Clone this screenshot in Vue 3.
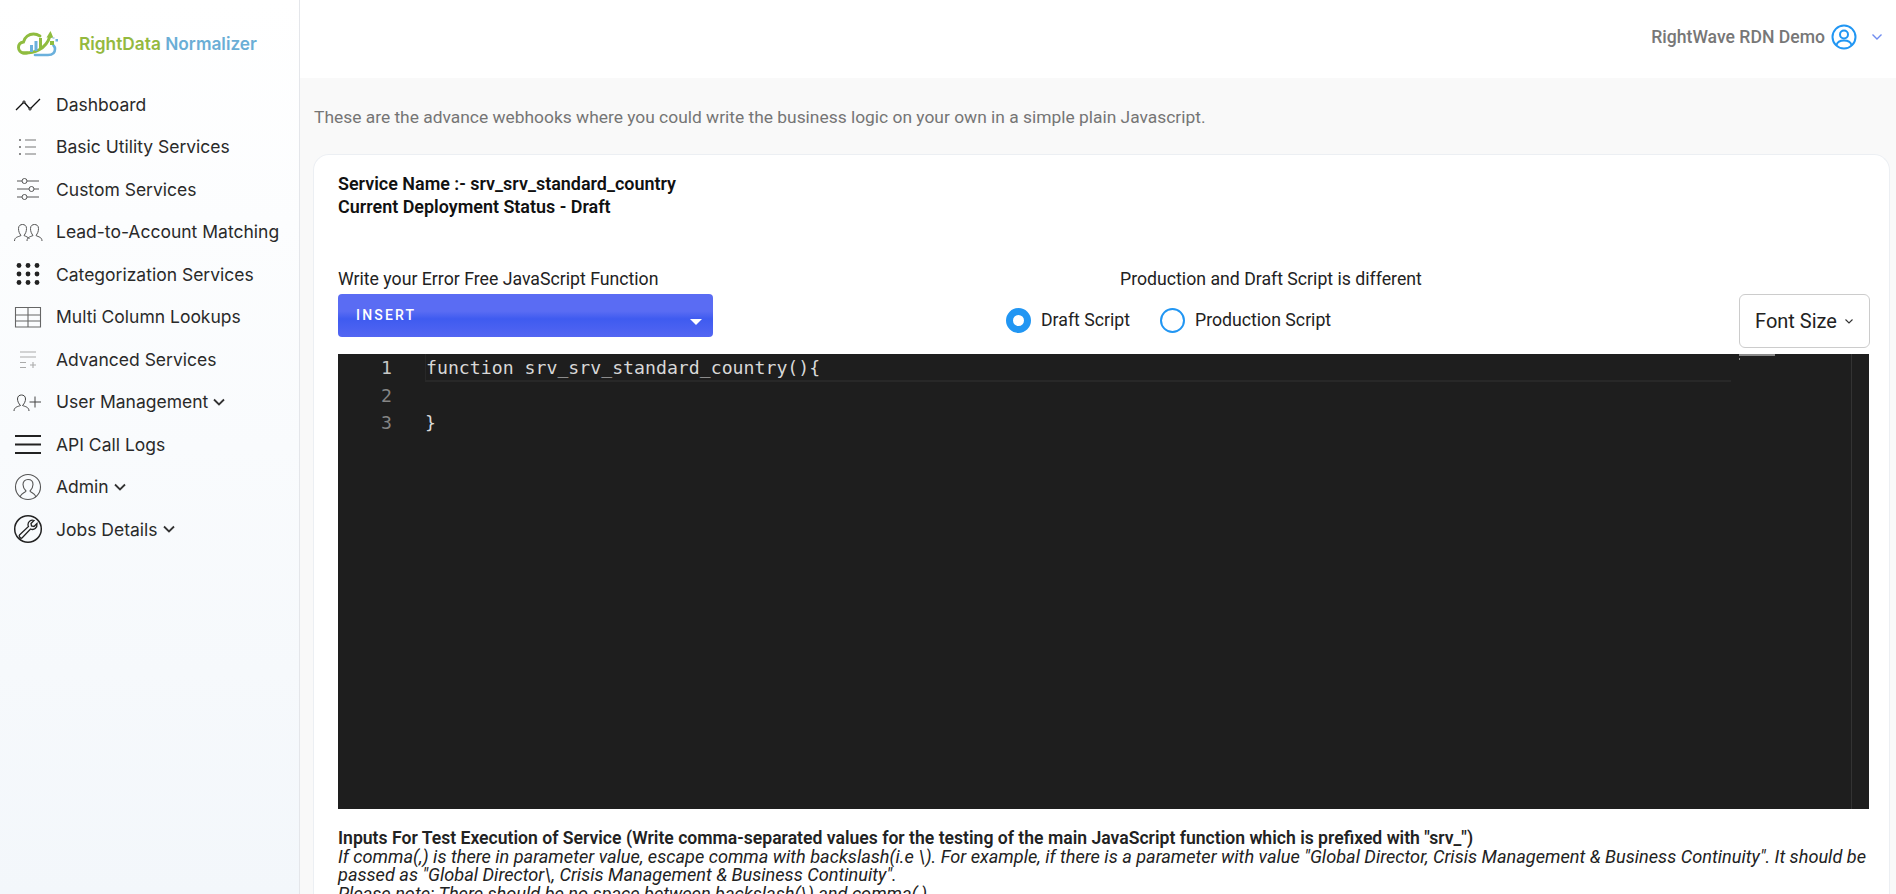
<script setup>
const nav = [
  { label: 'Dashboard', icon: 'chart' },
  { label: 'Basic Utility Services', icon: 'list' },
  { label: 'Custom Services', icon: 'sliders' },
  { label: 'Lead-to-Account Matching', icon: 'people' },
  { label: 'Categorization Services', icon: 'dots' },
  { label: 'Multi Column Lookups', icon: 'table' },
  { label: 'Advanced Services', icon: 'addlist' },
  { label: 'User Management', icon: 'useradd', caret: true },
  { label: 'API Call Logs', icon: 'menu' },
  { label: 'Admin', icon: 'admin', caret: true },
  { label: 'Jobs Details', icon: 'wrench', caret: true },
]
</script>

<template>
  <div class="app">
    <aside class="sidebar">
      <div class="brand">
        <svg class="logo" width="42" height="30" viewBox="0 0 42 30" fill="none">
          <path d="M10 25H7C3.500 25 1.500 22 1.500 19.500C1.500 16.500 3.500 14.500 6.500 14C7.500 9 12 6 16.500 6C19 6 21 6.700 23 8" stroke="#8fbc3f" stroke-width="2.900" stroke-linecap="round"/>
          <path d="M6 25C16 25.500 29 22 33 8" stroke="#8fbc3f" stroke-width="2.900" stroke-linecap="round"/>
          <path d="M29.500 9.500L33.500 3L36.500 10Z" fill="#8fbc3f"/>
          <path d="M18 27H31C35 27 38 25 38 21C38 19.500 37.500 18.500 36.500 17.500" stroke="#6ab0dc" stroke-width="2.600" stroke-linecap="round"/>
          <rect x="13" y="17" width="3" height="7" fill="#6ab0dc"/>
          <rect x="17.500" y="13" width="3" height="10" fill="#6ab0dc"/>
          <rect x="22" y="10" width="3" height="11" fill="#8fbc3f"/>
          <rect x="33" y="13" width="4" height="4" fill="#8fbc3f"/>
          <rect x="38.500" y="11" width="2.500" height="2.500" fill="#6ab0dc"/>
          <rect x="35.500" y="9" width="2" height="2" fill="#b9d6ea"/>
        </svg>
        <span class="brand-name"><span class="green">RightData</span> <span class="blue">Normalizer</span></span>
      </div>
      <nav class="nav">
        <div v-for="item in nav" :key="item.label" class="nav-item">
          <span class="nav-icon">
            <svg width="30" height="30" viewBox="0 0 30 30" fill="none" stroke="#333" stroke-width="1">
              <template v-if="item.icon === 'chart'">
                <path d="M3 21L11 13L17 20L27 10" stroke="#111" stroke-width="1.300"/>
                <circle cx="11" cy="13" r="1.100" fill="#fff" stroke="#111"/>
                <circle cx="17" cy="20" r="1.100" fill="#fff" stroke="#111"/>
              </template>
              <template v-else-if="item.icon === 'list'">
                <path d="M12 8H23M12 15H23M12 22H23" stroke="#777" stroke-width="1.200"/>
                <circle cx="7" cy="8" r="1" fill="#666" stroke="none"/>
                <circle cx="7" cy="15" r="1" fill="#666" stroke="none"/>
                <circle cx="7" cy="22" r="1" fill="#666" stroke="none"/>
              </template>
              <template v-else-if="item.icon === 'sliders'">
                <path d="M4 7H9M14 7H26M4 15H16M21 15H26M4 23H9M14 23H26" stroke="#555" stroke-width="1"/>
                <circle cx="11.500" cy="7" r="2.500" stroke="#555"/>
                <circle cx="18.500" cy="15" r="2.500" stroke="#555"/>
                <circle cx="11.500" cy="23" r="2.500" stroke="#555"/>
              </template>
              <template v-else-if="item.icon === 'people'">
                <path d="M1.500 24C1.500 20 5 20 8 18.500C6.500 16.500 5.500 14.500 5.500 11.500C5.500 8.500 7.500 7.500 9.500 7.500C11.500 7.500 13.500 8.500 13.500 11.500C13.500 14.500 12.500 16.500 11 18.500C13 19.500 15 20 16.500 22" stroke="#555"/>
                <path d="M14 24C14 20 17 20 20 18.500C18.500 16.500 17.500 14.500 17.500 11.500C17.500 8.500 19.500 7.500 21.500 7.500C23.500 7.500 25.500 8.500 25.500 11.500C25.500 14.500 24.500 16.500 23 18.500C25.500 20 29 20 29 24" stroke="#555"/>
              </template>
              <template v-else-if="item.icon === 'dots'">
                <g fill="#222" stroke="none">
                  <circle cx="6" cy="6.500" r="2.400"/><circle cx="15" cy="6.500" r="2.400"/><circle cx="24" cy="6.500" r="2.400"/>
                  <circle cx="6" cy="15" r="2.400"/><circle cx="15" cy="15" r="2.400"/><circle cx="24" cy="15" r="2.400"/>
                  <circle cx="6" cy="23.500" r="2.400"/><circle cx="15" cy="23.500" r="2.400"/><circle cx="24" cy="23.500" r="2.400"/>
                </g>
              </template>
              <template v-else-if="item.icon === 'table'">
                <path d="M2.500 5.500H27.500V25H2.500ZM2.500 13H27.500M2.500 19H27.500M15 5.500V25" stroke="#666" stroke-width="1.100"/>
              </template>
              <template v-else-if="item.icon === 'addlist'">
                <path d="M7 8H23M7 13H23M7 18.500H13M7 23.500H13M17 21H23M20 18V24" stroke="#aaa" stroke-width="1.100"/>
              </template>
              <template v-else-if="item.icon === 'useradd'">
                <path d="M1 24C1 20 5 19.500 7.500 18.500C5.500 16.500 4.500 14 4.500 12C4.500 9 6.500 8 8.500 8C10.500 8 12.500 9 12.500 12C12.500 14 11.500 16.500 9.500 18.500C12 19.500 16 20 16 24" stroke="#444"/>
                <path d="M16.500 15H28M22 9.500V20.500" stroke="#444"/>
              </template>
              <template v-else-if="item.icon === 'menu'">
                <path d="M2 7H28M2 15.500H28M2 24H28" stroke="#222" stroke-width="1.900"/>
              </template>
              <template v-else-if="item.icon === 'admin'">
                <circle cx="15" cy="15" r="12.500" stroke="#555" stroke-width="1.100"/>
                <path d="M7 25C8 21 12 21 13 19C11 17 10 15 10 12.500C10 9.500 12 7.500 15 7.500C18 7.500 20 9.500 20 12.500C20 15 19 17 17 19C18 21 22 21 23 25" stroke="#555" stroke-width="1.100"/>
              </template>
              <template v-else-if="item.icon === 'wrench'">
                <circle cx="15" cy="15" r="13.300" stroke="#222" stroke-width="1.500"/>
                <path d="M21 6.500C18 5.500 15 7.500 15 10.500C15 11.500 15.200 12 15.500 12.500L6.500 21C5.500 22 7.500 25 9 24L17.500 15C21 16.500 24.500 14 24 9.500L21 12.500L18.500 12L18 9.500Z" stroke="#222" stroke-width="1.300"/>
              </template>
            </svg>
          </span>
          <span class="nav-label">{{ item.label }}</span>
          <svg v-if="item.caret" class="caret" width="14" height="14" viewBox="0 0 14 14" fill="none">
            <path d="M2 4.500L7 9.500L12 4.500" stroke="#333" stroke-width="1.800"/>
          </svg>
        </div>
      </nav>
    </aside>

    <div class="main">
      <header class="topbar">
        <span class="user-name">RightWave RDN Demo</span>
        <svg class="user-icon" width="26" height="26" viewBox="0 0 26 26" fill="none" stroke="#2196f3" stroke-width="2">
          <circle cx="13" cy="13" r="11.500"/>
          <circle cx="13" cy="10.500" r="4"/>
          <path d="M5.500 21C6.500 17.500 9 16.500 13 16.500C17 16.500 19.500 17.500 20.500 21"/>
        </svg>
        <svg class="user-caret" width="12" height="8" viewBox="0 0 12 8" fill="none">
          <path d="M1.500 1.500L6 6L10.500 1.500" stroke="#6f8cf0" stroke-width="1.400"/>
        </svg>
      </header>

      <p class="intro">These are the advance webhooks where you could write the business logic on your own in a simple plain Javascript.</p>

      <section class="card">
        <div class="service">
          <div>Service Name :- srv_srv_standard_country</div>
          <div>Current Deployment Status - Draft</div>
        </div>

        <div class="controls">
          <div class="col-left">
            <div class="field-label">Write your Error Free JavaScript Function</div>
            <button class="insert">
              <span>INSERT</span>
              <i class="insert-arrow"></i>
            </button>
          </div>
          <div class="col-mid">
            <div class="field-label">Production and Draft Script is different</div>
            <div class="radios">
              <label class="radio"><i class="dot on"></i>Draft Script</label>
              <label class="radio"><i class="dot"></i>Production Script</label>
            </div>
          </div>
          <button class="font-size">Font Size
            <svg width="10" height="7" viewBox="0 0 10 7" fill="none"><path d="M1.500 1.500L5 5L8.500 1.500" stroke="#333" stroke-width="1.100"/></svg>
          </button>
        </div>

        <div class="editor">
          <div class="gutter">
            <div class="ln active">1</div>
            <div class="ln">2</div>
            <div class="ln">3</div>
          </div>
          <div class="code">
            <div class="line current">function srv_srv_standard_country(){</div>
            <div class="line">&nbsp;</div>
            <div class="line">}</div>
          </div>
          <div class="minimap">
            <div class="mini-line"></div>
            <div class="mini-dot"></div>
          </div>
          <div class="ruler"></div>
        </div>

        <div class="notes">
          <div class="notes-title">Inputs For Test Execution of Service (Write comma-separated values for the testing of the main JavaScript function which is prefixed with "srv_")</div>
          <em>If comma(,) is there in parameter value, escape comma with backslash(i.e \). For example, if there is a parameter with value "Global Director, Crisis Management &amp; Business Continuity". It should be passed as "Global Director\, Crisis Management &amp; Business Continuity".</em>
          <em class="block">Please note: There should be no space between backslash(\) and comma(,).</em>
        </div>
      </section>
    </div>
  </div>
</template>

<style>
html, body { margin: 0; height: 100%; overflow: hidden; }
</style>

<style scoped>
.app {
  display: flex;
  height: 894px;
  overflow: hidden;
  font-family: Roboto, sans-serif;
  color: #1f1f1f;
  background: #f9f9f9;
}
.sidebar {
  width: 300px;
  flex: none;
  box-sizing: border-box;
  border-right: 1px solid #e4e6ea;
  background: linear-gradient(180deg, #ffffff 0%, #f3f7fb 100%);
  font-family: Inter, sans-serif;
}
.brand {
  display: flex;
  align-items: center;
  height: 83px;
  padding: 4px 0 0 17px;
  box-sizing: border-box;
}
.logo { flex: none; margin-top: -2px; }
.brand-name {
  margin-left: 20px;
  font-size: 17.300px;
  font-weight: 600;
  white-space: nowrap;
}
.green { color: #94b93f; }
.blue { color: #6aaed6; }
.nav-item {
  display: flex;
  align-items: center;
  height: 42.500px;
  padding-left: 13px;
  font-size: 17.500px;
  color: #2a2a2a;
  white-space: nowrap;
}
.nav-icon {
  width: 30px;
  height: 30px;
  flex: none;
  margin-right: 13px;
}
.caret { margin-left: 4px; }
.main {
  flex: 1;
  min-width: 0;
  display: flex;
  flex-direction: column;
}
.topbar {
  height: 78px;
  flex: none;
  background: #fff;
  display: flex;
  align-items: center;
  justify-content: flex-end;
  padding-right: 13px;
  padding-bottom: 5px;
  box-sizing: border-box;
}
.user-name {
  font-size: 17.600px;
  font-weight: 500;
  color: #777;
}
.user-icon { margin-left: 6px; }
.user-caret { margin-left: 14px; }
.intro {
  margin: 0;
  padding: 29px 0 0 14px;
  font-size: 17.400px;
  line-height: 20px;
  color: #757575;
}
.card {
  margin: 27px 6px 0 13px;
  flex: 1;
  min-height: 0;
  background: #fff;
  border: 1px solid #eceff3;
  border-bottom: 0;
  border-radius: 16px 16px 0 0;
  padding: 17px 20px 0 24px;
  overflow: hidden;
}
.service {
  font-size: 17.950px;
  font-weight: 600;
  line-height: 23px;
  color: #111;
}
.controls {
  display: flex;
  align-items: flex-start;
  margin-top: 49px;
  height: 87px;
  font-size: 17.700px;
}
.col-left { width: 375px; flex: none; }
.field-label { line-height: 24px; color: #222; }
.insert {
  width: 100%;
  height: 43px;
  margin-top: 3px;
  display: flex;
  position: relative;
  align-items: center;
  border: 0;
  border-radius: 4px;
  padding: 0 0 1px 18px;
  color: #fff;
  font: 500 14px Roboto, sans-serif;
  letter-spacing: 2.200px;
  background: linear-gradient(180deg, #5a6cf3 0%, #5a6cf3 40%, #3f5bf0 58%, #5366f2 100%);
}
.insert-arrow {
  position: absolute;
  right: 11px;
  top: 25px;
  border-left: 6px solid transparent;
  border-right: 6px solid transparent;
  border-top: 6px solid #fff;
}
.col-mid {
  margin-left: 407px;
  width: 380px;
  flex: none;
}
.radios {
  display: flex;
  margin-top: 15px;
  margin-left: -114px;
  gap: 30px;
}
.radio {
  display: flex;
  align-items: center;
  gap: 10px;
  height: 28px;
  color: #222;
  white-space: nowrap;
}
.dot {
  width: 25px;
  height: 25px;
  box-sizing: border-box;
  border: 2px solid #2196f3;
  border-radius: 50%;
}
.dot.on {
  border: 7px solid #2196f3;
}
.font-size {
  margin-left: auto;
  margin-right: -1px;
  margin-top: 27px;
  width: 131px;
  height: 54px;
  flex: none;
  background: #fff;
  border: 1px solid #ccc;
  border-radius: 6px;
  font: 400 20px Roboto, sans-serif;
  color: #222;
  display: flex;
  align-items: center;
  justify-content: center;
  gap: 7px;
  padding: 0;
}
.editor {
  position: relative;
  height: 455px;
  background: #1e1e1e;
  display: flex;
  font-family: "DejaVu Sans Mono", monospace;
  font-size: 18.200px;
  line-height: 27.500px;
  color: #d8d8d8;
}
.gutter {
  width: 87px;
  flex: none;
  color: #858585;
  text-align: right;
}
.ln { padding-right: 33px; height: 27.500px; }
.ln.active { color: #c6c6c6; }
.code {
  flex: 1;
  min-width: 0;
  margin-right: 138px;
}
.line { height: 27.500px; white-space: pre; }
.line.current {
  box-sizing: border-box;
  border: 1px solid #282828;
  border-width: 0 0 2px 1px;
  height: 28px;
  margin-bottom: -0.500px;
}
.minimap {
  position: absolute;
  right: 94px;
  top: 0;
  width: 36px;
}
.mini-line { height: 2px; background: #8a8a8a; }
.mini-dot { width: 1px; height: 2px; margin-top: 2px; background: #8a8a8a; }
.ruler {
  position: absolute;
  top: 0;
  bottom: 0;
  right: 17px;
  width: 1px;
  background: #333;
}
.notes {
  margin-top: 21px;
  margin-right: -6px;
  font-size: 17.600px;
  line-height: 17.600px;
  color: #222;
}
.notes em { font-size: 18.150px; }
.notes-title { font-weight: 600; }
.block { display: block; }
</style>
